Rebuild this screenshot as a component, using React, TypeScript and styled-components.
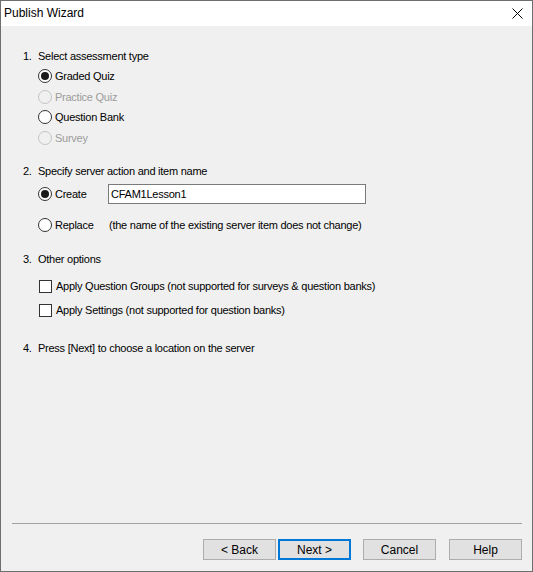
import React from 'react';
import styled, { createGlobalStyle } from 'styled-components';

const GlobalStyle = createGlobalStyle`
  html, body {
    margin: 0;
    padding: 0;
    background: #f0f0f0;
  }
  * {
    box-sizing: border-box;
  }
`;

const Window = styled.div`
  width: 533px;
  height: 572px;
  border: 1px solid #6e6e6e;
  background: #f0f0f0;
  display: flex;
  flex-direction: column;
  font-family: "Liberation Sans", Arial, sans-serif;
  font-size: 11px;
  letter-spacing: -0.25px;
  color: #000;
`;

const TitleBar = styled.div`
  height: 25px;
  background: #fff;
  display: flex;
  align-items: center;
  justify-content: space-between;
  padding: 0 0 1px 3px;
`;

const Title = styled.span`
  font-size: 12px;
  letter-spacing: 0;
  color: #000;
`;

const CloseButton = styled.div`
  width: 30px;
  height: 25px;
  display: flex;
  align-items: center;
  justify-content: center;
`;

const Content = styled.div`
  flex: 1;
  padding: 19px 0 0 21px;
  display: flex;
  flex-direction: column;
`;

const Section = styled.div<{ $top?: number }>`
  display: flex;
  flex-direction: column;
  margin-top: ${p => p.$top ?? 0}px;
`;

const Heading = styled.div`
  height: 21px;
  display: flex;
  align-items: center;
`;

const Num = styled.span`
  width: 16px;
  padding-left: 1px;
`;

const Options = styled.div<{ $gap?: number; $top?: number }>`
  display: flex;
  flex-direction: column;
  padding-left: 16px;
  padding-top: ${p => p.$top ?? 0}px;
  gap: ${p => p.$gap ?? 0}px;
`;

const OptionRow = styled.label<{ $h?: number; $disabled?: boolean }>`
  height: ${p => p.$h ?? 20.6}px;
  display: flex;
  align-items: center;
  color: ${p => (p.$disabled ? '#9c9c9c' : '#000')};
`;

const RadioCircle = styled.span<{ $checked?: boolean; $disabled?: boolean }>`
  width: 14px;
  height: 14px;
  border-radius: 50%;
  border: 1px solid ${p => (p.$disabled ? '#c4c4c4' : '#333')};
  background: ${p => (p.$disabled ? '#f0f0f0' : '#fff')};
  display: flex;
  align-items: center;
  justify-content: center;
  margin-right: 3px;
  flex-shrink: 0;

  &::after {
    content: '';
    display: ${p => (p.$checked ? 'block' : 'none')};
    width: 8px;
    height: 8px;
    border-radius: 50%;
    background: #1a1a1a;
  }
`;

const CheckBox = styled.span`
  width: 13px;
  height: 13px;
  border: 1px solid #333;
  background: #fff;
  margin: 0 4px 0 1px;
  flex-shrink: 0;
`;

const ActionLabel = styled.span`
  width: 53px;
`;

const TextBox = styled.div`
  width: 258px;
  height: 20px;
  border: 1px solid #7a7a7a;
  background: #fff;
  display: flex;
  align-items: center;
  padding-left: 2px;
`;

const Hint = styled.span`
  padding-left: 1px;
`;

const Separator = styled.div`
  height: 1px;
  margin: 0 10px 0 11px;
  background: #a0a0a0;
`;

const ButtonBar = styled.div`
  display: flex;
  justify-content: flex-end;
  padding: 15px 10px 11px 0;
`;

const Button = styled.button<{ $default?: boolean; $space?: number }>`
  width: 73px;
  height: 21px;
  margin: 0 0 0 ${p => p.$space ?? 0}px;
  padding: 0;
  font-family: "Liberation Sans", Arial, sans-serif;
  font-size: 12px;
  color: #000;
  background: #e1e1e1;
  border: ${p => (p.$default ? '2px solid #0078d7' : '1px solid #adadad')};
`;

const Radio = ({ label, checked, disabled }: { label: string; checked?: boolean; disabled?: boolean }) => (
  <OptionRow $disabled={disabled}>
    <RadioCircle $checked={checked} $disabled={disabled} />
    {label}
  </OptionRow>
);

export default function App() {
  return (
    <>
      <GlobalStyle />
      <Window>
        <TitleBar>
          <Title>Publish Wizard</Title>
          <CloseButton>
            <svg width="11" height="11" viewBox="0 0 11 11">
              <path d="M0.5 0.5 L10.5 10.5 M10.5 0.5 L0.5 10.5" stroke="#000" strokeWidth="1" />
            </svg>
          </CloseButton>
        </TitleBar>

        <Content>
          <Section>
            <Heading><Num>1.</Num>Select assessment type</Heading>
            <Options>
              <Radio label="Graded Quiz" checked />
              <Radio label="Practice Quiz" disabled />
              <Radio label="Question Bank" />
              <Radio label="Survey" disabled />
            </Options>
          </Section>

          <Section $top={12}>
            <Heading><Num>2.</Num>Specify server action and item name</Heading>
            <Options $gap={7}>
              <OptionRow $h={26}>
                <RadioCircle $checked />
                <ActionLabel>Create</ActionLabel>
                <TextBox>CFAM1Lesson1</TextBox>
              </OptionRow>
              <OptionRow $h={22}>
                <RadioCircle />
                <ActionLabel>Replace</ActionLabel>
                <Hint>(the name of the existing server item does not change)</Hint>
              </OptionRow>
            </Options>
          </Section>

          <Section $top={12}>
            <Heading><Num>3.</Num>Other options</Heading>
            <Options $top={5}>
              <OptionRow $h={24}>
                <CheckBox />
                Apply Question Groups (not supported for surveys &amp; question banks)
              </OptionRow>
              <OptionRow $h={24}>
                <CheckBox />
                Apply Settings (not supported for question banks)
              </OptionRow>
            </Options>
          </Section>

          <Section $top={15}>
            <Heading><Num>4.</Num>Press [Next] to choose a location on the server</Heading>
          </Section>
        </Content>

        <Separator />
        <ButtonBar>
          <Button>&lt; Back</Button>
          <Button $default $space={2}>Next &gt;</Button>
          <Button $space={12}>Cancel</Button>
          <Button $space={13}>Help</Button>
        </ButtonBar>
      </Window>
    </>
  );
}
